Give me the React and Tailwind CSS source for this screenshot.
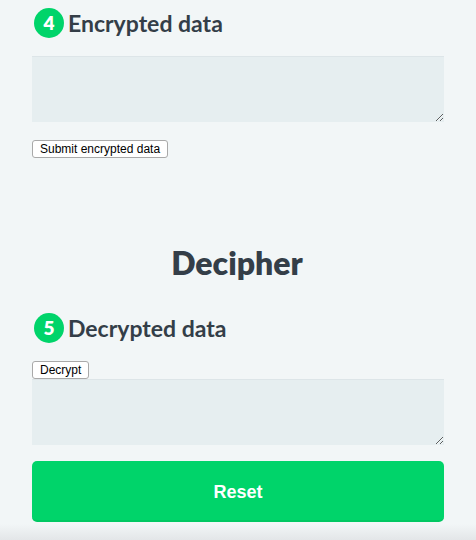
import React from 'react';

function Badge({ n }) {
    return (
        <span className="w-[30px] h-[30px] rounded-full bg-[#00d46a] text-white flex items-center justify-center text-[19px] font-extrabold shrink-0">
            {n}
        </span>
    );
}

function SmallButton({ children }) {
    return (
        <button className="block bg-white border border-[#a9a9a9] rounded-[3px] px-[7px] h-[18px] text-[12px] leading-none text-black font-['Liberation_Sans',sans-serif]">
            {children}
        </button>
    );
}

export default function App() {
    return (
        <div className="relative min-h-[540px] h-[540px] overflow-hidden bg-[#f2f6f7] font-['Lato',sans-serif] text-[#343e48]">
            <div className="px-8 pt-2">
                <h2 className="flex items-center gap-[4px] ml-[2px] text-[23px] font-bold leading-[30px]">
                    <Badge n="4" />
                    <span>Encrypted data</span>
                </h2>
                <textarea className="block mt-[18px] w-[412px] h-[66px] bg-[#e6eef0] border-t border-[#dde5e8] outline-none" />
                <div className="mt-[18px]">
                    <SmallButton>Submit encrypted data</SmallButton>
                </div>

                <h1 className="mt-[85px] text-center text-[32px] font-extrabold leading-[40px] pr-[2px]">Decipher</h1>

                <h2 className="mt-[30px] flex items-center gap-[4px] ml-[2px] text-[23px] font-bold leading-[30px]">
                    <Badge n="5" />
                    <span>Decrypted data</span>
                </h2>
                <div className="mt-[18px]">
                    <SmallButton>Decrypt</SmallButton>
                </div>
                <textarea className="block w-[412px] h-[66px] bg-[#e6eef0] border-t border-[#dde5e8] outline-none" />
                <button className="mt-[16px] pt-[3px] w-[412px] h-[61px] rounded-[5px] bg-[#00d46a] text-white text-[18px] font-bold font-['Liberation_Sans',sans-serif] border-b-2 border-[#00c862]">
                    Reset
                </button>
            </div>
            <div className="absolute left-0 right-0 bottom-0 h-[16px] bg-gradient-to-b from-[#f2f6f7] to-[#e3e6e8]" />
        </div>
    );
}
